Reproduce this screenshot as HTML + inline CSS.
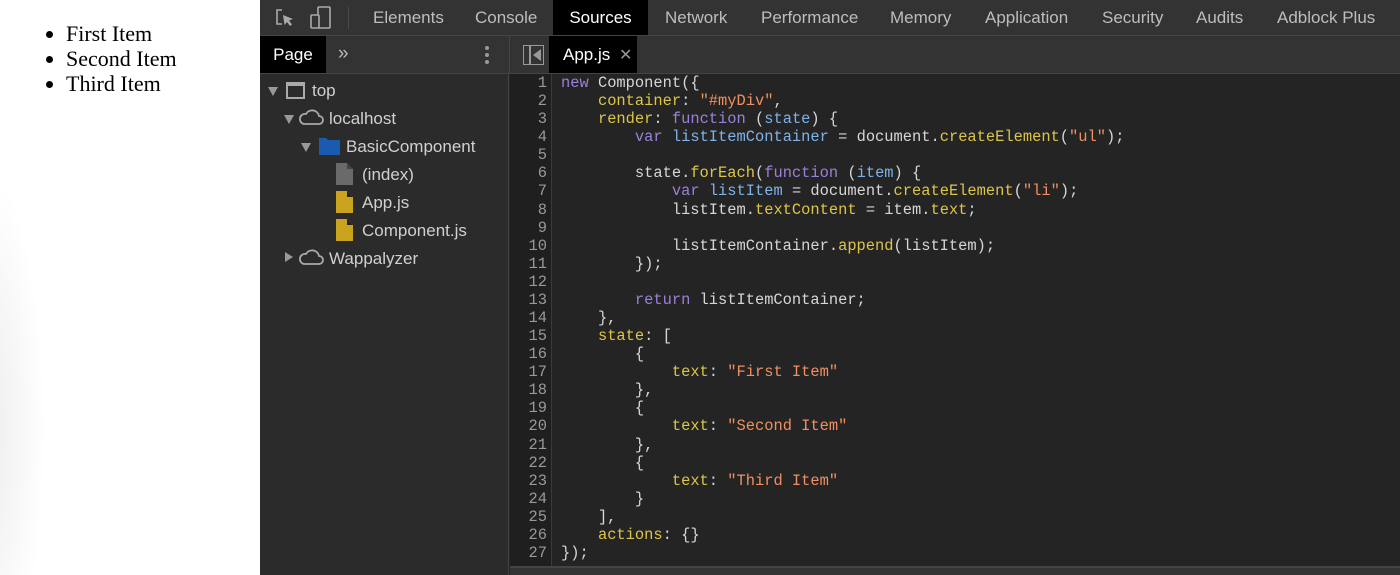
<!DOCTYPE html>
<html><head><style>
*{margin:0;padding:0;box-sizing:border-box}
body{width:1400px;height:575px;overflow:hidden;background:#fff;position:relative;font-family:"Liberation Sans",sans-serif}
#page{position:absolute;left:0;top:0;width:260px;height:575px;background:radial-gradient(ellipse 60px 260px at -15px 430px,#ececec,#fff)}
#page ul{position:absolute;left:66px;top:21px;font-family:"Liberation Serif",serif;font-size:22px;line-height:25px;color:#000}
#dt{position:absolute;left:260px;top:0;width:1140px;height:575px;background:#242424;color:#ccc}
.tb{position:absolute;left:0;top:0;width:1140px;height:36px;background:#333;border-bottom:1px solid #444}
.tab{position:absolute;top:0;height:35px;line-height:35px;font-size:17px;color:#bdbdbd}
.bar2{position:absolute;left:0;top:36px;width:1140px;height:38px;background:#333;border-bottom:1px solid #444}
.nav{position:absolute;left:0;top:74px;width:249px;height:501px;background:#2b2b2b;border-right:1px solid #444}
.row{position:absolute;height:28px;line-height:28px;font-size:17px;color:#d0d0d0}
.tri{position:absolute;width:0;height:0}
.gut{position:absolute;left:250px;top:74px;width:42px;height:493px;background:#1f1f1f;border-right:1px solid #3a3a3a}
.code{position:absolute;top:74px;font-family:"Liberation Mono",monospace;font-size:15.4px;line-height:18.08px;white-space:pre}
.gut pre{font-family:"Liberation Mono",monospace;font-size:15.4px;line-height:18.08px;color:#999;text-align:right;padding-right:4px}
.k{color:#9b80d8}.p{color:#dcc547}.s{color:#f09060}.v{color:#7fb3e8}
</style></head><body>
<div id="page"><ul><li>First Item</li><li>Second Item</li><li>Third Item</li></ul></div>
<div id="dt">
 <div class="tb">
  <svg style="position:absolute;left:14px;top:7px" width="22" height="22" viewBox="0 0 22 22" fill="none" stroke="#aaa" stroke-width="1.6"><path d="M8 3H3v14h5"/><path d="M9 8l10 4-4 1.5 3 4-2 1.5-3-4-2.5 3z" fill="#aaa" stroke="none"/></svg>
  <svg style="position:absolute;left:50px;top:6px" width="22" height="23" viewBox="0 0 22 23" fill="none" stroke="#aaa" stroke-width="1.6"><rect x="8" y="1" width="12" height="21" rx="1"/><rect x="1" y="9" width="8" height="13" rx="1" fill="#333"/></svg>
  <div style="position:absolute;left:88px;top:7px;width:1px;height:22px;background:#4a4a4a"></div>
  <div class="tab" style="left:113px">Elements</div>
  <div class="tab" style="left:215px">Console</div>
  <div class="tab" style="left:293px;width:95px;background:#000;color:#fff;text-align:center">Sources</div>
  <div class="tab" style="left:405px">Network</div>
  <div class="tab" style="left:501px">Performance</div>
  <div class="tab" style="left:630px">Memory</div>
  <div class="tab" style="left:725px">Application</div>
  <div class="tab" style="left:842px">Security</div>
  <div class="tab" style="left:936px">Audits</div>
  <div class="tab" style="left:1017px">Adblock Plus</div>
 </div>
 <div class="bar2">
  <div class="tab" style="left:0;top:0;width:66px;height:37px;line-height:37px;background:#000;color:#fff;text-align:center">Page</div>
  <div class="tab" style="left:78px;height:37px;line-height:36px;font-size:19px;color:#bbb">»</div>
  <div style="position:absolute;left:225px;top:10px;width:4px;height:4px;border-radius:2px;background:#999;box-shadow:0 7px 0 #999,0 14px 0 #999"></div>
  <div style="position:absolute;left:249px;top:0;width:1px;height:38px;background:#444"></div>
  <div style="position:absolute;left:263px;top:9px;width:21px;height:20px;border:1.5px solid #999"></div>
  <div style="position:absolute;left:269px;top:9px;width:1.5px;height:20px;background:#999"></div>
  <div class="tri" style="left:273px;top:13px;border-right:8px solid #999;border-top:6px solid transparent;border-bottom:6px solid transparent"></div>
  <div class="tab" style="left:289px;top:0;width:88px;height:37px;line-height:37px;background:#000;color:#fff;padding-left:14px">App.js <span style="color:#999;font-size:16px;margin-left:4px">✕</span></div>
 </div>
 <div class="nav">
  <div class="tri" style="left:8px;top:13px;border-top:9px solid #999;border-left:5px solid transparent;border-right:5px solid transparent"></div>
  <div style="position:absolute;left:26px;top:8px;width:19px;height:17px;border:2px solid #aaa;border-top-width:4px"></div>
  <div class="row" style="left:52px;top:3px">top</div>
  <div class="tri" style="left:24px;top:41px;border-top:9px solid #999;border-left:5px solid transparent;border-right:5px solid transparent"></div>
  <svg style="position:absolute;left:38px;top:34px" width="26" height="18" viewBox="0 0 26 18" fill="none" stroke="#aaa" stroke-width="1.8"><path d="M6 16h15a4 4 0 0 0 0-8 7 7 0 0 0-13-2 5 5 0 0 0-2 10z"/></svg>
  <div class="row" style="left:69px;top:31px">localhost</div>
  <div class="tri" style="left:41px;top:69px;border-top:9px solid #999;border-left:5px solid transparent;border-right:5px solid transparent"></div>
  <svg style="position:absolute;left:59px;top:63px" width="21" height="18" viewBox="0 0 21 18"><path d="M0 1h7l2 2h12v15H0z" fill="#1a5ab0"/></svg>
  <div class="row" style="left:86px;top:59px">BasicComponent</div>
  <svg style="position:absolute;left:76px;top:89px" width="17" height="22" viewBox="0 0 17 22"><path d="M0 0h11l6 6v16H0z" fill="#6a6a6a"/><path d="M11 0v6h6" fill="#444"/></svg>
  <div class="row" style="left:102px;top:87px">(index)</div>
  <svg style="position:absolute;left:76px;top:117px" width="17" height="22" viewBox="0 0 17 22"><path d="M0 0h11l6 6v16H0z" fill="#c9a21e"/><path d="M11 0v6h6z" fill="#222"/></svg>
  <div class="row" style="left:102px;top:115px">App.js</div>
  <svg style="position:absolute;left:76px;top:145px" width="17" height="22" viewBox="0 0 17 22"><path d="M0 0h11l6 6v16H0z" fill="#c9a21e"/><path d="M11 0v6h6z" fill="#222"/></svg>
  <div class="row" style="left:102px;top:143px">Component.js</div>
  <div class="tri" style="left:25px;top:178px;border-left:8px solid #999;border-top:5px solid transparent;border-bottom:5px solid transparent"></div>
  <svg style="position:absolute;left:38px;top:174px" width="26" height="18" viewBox="0 0 26 18" fill="none" stroke="#aaa" stroke-width="1.8"><path d="M6 16h15a4 4 0 0 0 0-8 7 7 0 0 0-13-2 5 5 0 0 0-2 10z"/></svg>
  <div class="row" style="left:69px;top:171px">Wappalyzer</div>
 </div>
 <div class="gut"><pre>1
2
3
4
5
6
7
8
9
10
11
12
13
14
15
16
17
18
19
20
21
22
23
24
25
26
27</pre></div>
 <div class="code" style="left:301px;color:#d6d6d6"><span class="k">new</span> Component({
    <span class="p">container</span>: <span class="s">"#myDiv"</span>,
    <span class="p">render</span>: <span class="k">function</span> (<span class="v">state</span>) {
        <span class="k">var</span> <span class="v">listItemContainer</span> = document.<span class="p">createElement</span>(<span class="s">"ul"</span>);

        state.<span class="p">forEach</span>(<span class="k">function</span> (<span class="v">item</span>) {
            <span class="k">var</span> <span class="v">listItem</span> = document.<span class="p">createElement</span>(<span class="s">"li"</span>);
            listItem.<span class="p">textContent</span> = item.<span class="p">text</span>;

            listItemContainer.<span class="p">append</span>(listItem);
        });

        <span class="k">return</span> listItemContainer;
    },
    <span class="p">state</span>: [
        {
            <span class="p">text</span>: <span class="s">"First Item"</span>
        },
        {
            <span class="p">text</span>: <span class="s">"Second Item"</span>
        },
        {
            <span class="p">text</span>: <span class="s">"Third Item"</span>
        }
    ],
    <span class="p">actions</span>: {}
});</div>
 <div style="position:absolute;left:250px;top:566px;width:890px;height:9px;background:#333;border-top:2px solid #444"></div>
</div>
</body></html>
